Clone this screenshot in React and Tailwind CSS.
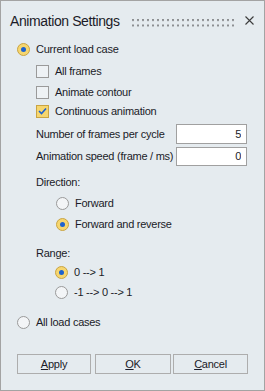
import { useState } from 'react';

function Radio({ checked }) {
    return (
        <span className={`flex h-[13px] w-[13px] shrink-0 items-center justify-center rounded-full border ${checked ? 'border-[#c9a443] bg-[#f6d66f]' : 'border-[#9a9a9a] bg-[#f3f5f7]'}`}>
            {checked && <span className="h-[5px] w-[5px] rounded-full bg-[#1d62cf]" />}
        </span>
    );
}

function Check({ checked }) {
    return (
        <span className={`flex h-[13px] w-[13px] shrink-0 items-center justify-center border ${checked ? 'border-[#c9a443] bg-[#f6d66f]' : 'border-[#9a9a9a] bg-[#eef2f5]'}`}>
            {checked && (
                <svg width="9" height="8" viewBox="0 0 9 8">
                    <path d="M1 4 L3.5 6.5 L8 1.5" fill="none" stroke="#1d62cf" strokeWidth="1.6" />
                </svg>
            )}
        </span>
    );
}

function Row({ className, children }) {
    return <div className={`flex h-[20px] items-center whitespace-nowrap ${className}`}>{children}</div>;
}

export default function App() {
    const [frames] = useState('5');
    const [speed] = useState('0');

    return (
        <div className="h-[391px] w-[265px] border border-[#a3a3a3] bg-[#e5ebef] text-[11px] tracking-[-0.25px] text-[#1b1b28]" style={{ fontFamily: '"Liberation Sans", Arial, sans-serif' }}>
            {/* Title bar */}
            <div className="flex h-[30px] items-end pl-[9px] pr-[10px]">
                <span className="whitespace-nowrap text-[14px] leading-[20px] tracking-[-0.4px]">Animation Settings</span>
                <svg className="mb-[4px] ml-auto shrink-0" width="104" height="8" viewBox="0 0 104 8">
                    <defs>
                        <pattern id="grip" width="5" height="5.5" patternUnits="userSpaceOnUse">
                            <rect x="0" y="0" width="2" height="2" fill="#8d8f92" />
                        </pattern>
                    </defs>
                    <rect x="0" y="0" width="104" height="8" fill="url(#grip)" />
                </svg>
                <svg className="mb-[6px] ml-[9px] shrink-0" width="9" height="9" viewBox="0 0 9 9">
                    <path d="M0.5 0.5 L8.5 8.5 M8.5 0.5 L0.5 8.5" stroke="#3c3c3c" strokeWidth="1.1" />
                </svg>
            </div>

            <div className="px-[16px]">
                <Row className="mt-[8px] gap-[6px]"><Radio checked /> <span>Current load case</span></Row>

                <div className="pl-[19px]">
                    <Row className="mt-[2px] gap-[6px]"><Check /> <span>All frames</span></Row>
                    <Row className="mt-[1px] gap-[6px]"><Check /> <span>Animate contour</span></Row>
                    <Row className="-mt-[1px] gap-[6px]"><Check checked /> <span>Continuous animation</span></Row>

                    <Row className="mt-[3px] justify-between pr-[1px]">
                        <span>Number of frames per cycle</span>
                        <input readOnly value={frames} className="h-[20px] w-[71px] border border-[#a0a0a0] bg-white pr-[5px] text-right outline-none" />
                    </Row>
                    <Row className="mt-[2px] justify-between pr-[1px]">
                        <span>Animation speed (frame / ms)</span>
                        <input readOnly value={speed} className="h-[19px] w-[71px] border border-[#a0a0a0] bg-white pr-[5px] text-right outline-none" />
                    </Row>

                    <Row className="mt-[6px]">Direction:</Row>
                    <div className="pl-[20px]">
                        <Row className="mt-[1px] gap-[6px]"><Radio /> <span>Forward</span></Row>
                        <Row className="mt-[1px] gap-[6px]"><Radio checked /> <span>Forward and reverse</span></Row>
                    </div>

                    <Row className="mt-[9px]">Range:</Row>
                    <div className="pl-[19px]">
                        <Row className="-mt-[1px] gap-[6px]"><Radio checked /> <span>0 --&gt; 1</span></Row>
                        <Row className="gap-[6px]"><Radio /> <span>-1 --&gt; 0 --&gt; 1</span></Row>
                    </div>
                </div>

                <Row className="mt-[10px] gap-[6px]"><Radio /> <span>All load cases</span></Row>

                <div className="mt-[22px] flex">
                    <button className="h-[20px] w-[75px] border border-[#adadad] bg-[#e5ebef]"><u>A</u>pply</button>
                    <button className="ml-[4px] h-[20px] w-[77px] border border-[#adadad] bg-[#e5ebef]"><u>O</u>K</button>
                    <button className="ml-[2px] h-[20px] w-[76px] border border-[#adadad] bg-[#e5ebef]"><u>C</u>ancel</button>
                </div>
            </div>
        </div>
    );
}
